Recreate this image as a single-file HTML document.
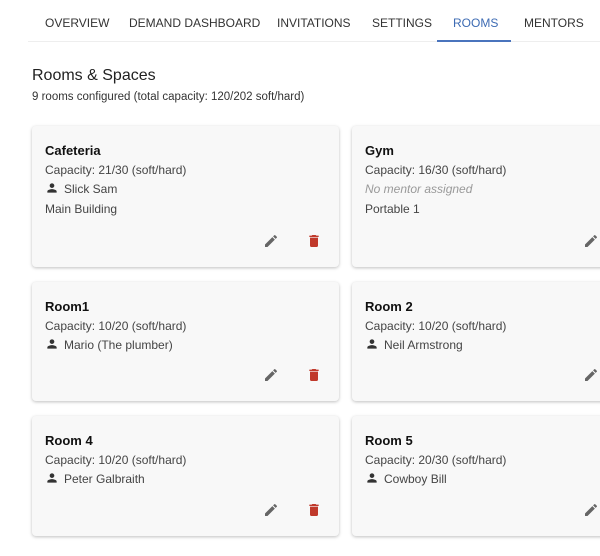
<!DOCTYPE html>
<html><head><style>
body{margin:0;width:600px;height:556px;overflow:hidden;background:#fff;font-family:"Liberation Sans",sans-serif;color:#222;position:relative}
#wrap{position:absolute;left:0;top:0;width:600px;height:556px;overflow:hidden}
.tab{position:absolute;top:16px;font-size:12px;color:#333}
.card{position:absolute;background:#f8f8f8;border-radius:4px;box-shadow:0 1px 3px rgba(0,0,0,.25);width:307px}
.card b{position:absolute;left:13px;top:17px;font-size:13px;color:#111}
.l{position:absolute;left:13px;font-size:12px;color:#444;white-space:nowrap}
.ic{position:absolute}
</style></head><body><div id="wrap">
<div class="tab" style="left:45px">OVERVIEW</div>
<div class="tab" style="left:129px">DEMAND DASHBOARD</div>
<div class="tab" style="left:277px">INVITATIONS</div>
<div class="tab" style="left:372px">SETTINGS</div>
<div class="tab" style="left:453px;color:#3d6bb3">ROOMS</div>
<div class="tab" style="left:524px">MENTORS</div>
<div style="position:absolute;left:28px;right:0;top:41px;height:1px;background:#eee"></div>
<div style="position:absolute;left:437px;width:74px;top:40px;height:2px;background:#4a74bd"></div>
<div style="position:absolute;left:32px;top:67px;font-size:16px;color:#222">Rooms &amp; Spaces</div>
<div style="position:absolute;left:32px;top:91px;font-size:11.5px;color:#333">9 rooms configured (total capacity: 120/202 soft/hard)</div>
<div id="c"></div>
</div>
<script>
var P='<svg class="ic" width="14" height="14" viewBox="0 0 24 24"><path fill="#333" d="M12 12c2.2 0 4-1.8 4-4s-1.8-4-4-4-4 1.8-4 4 1.8 4 4 4zm0 2c-2.7 0-8 1.3-8 4v2h16v-2c0-2.7-5.3-4-8-4z"/></svg>';
var E='<svg width="16" height="16" viewBox="0 0 24 24"><path fill="#666" d="M3 17.25V21h3.75L17.8 9.94l-3.75-3.75L3 17.25zM20.7 7.04a1 1 0 0 0 0-1.41l-2.34-2.34a1 1 0 0 0-1.41 0l-1.83 1.83 3.75 3.75 1.83-1.83z"/></svg>';
var D='<svg width="16" height="16" viewBox="0 0 24 24"><path fill="#c0392b" d="M6 19c0 1.1.9 2 2 2h8c1.1 0 2-.9 2-2V7H6v12zM19 4h-3.5l-1-1h-5l-1 1H5v2h14V4z"/></svg>';
var cards=[
[32,126,141,"Cafeteria","21/30","Slick Sam","Main Building",1],
[352,126,141,"Gym","16/30",null,"Portable 1",0],
[32,282,119,"Room1","10/20","Mario (The plumber)",null,1],
[352,282,119,"Room 2","10/20","Neil Armstrong",null,0],
[32,416,120,"Room 4","10/20","Peter Galbraith",null,1],
[352,416,120,"Room 5","20/30","Cowboy Bill",null,0]];
var h='';
cards.forEach(function(c){
h+='<div class="card" style="left:'+c[0]+'px;top:'+c[1]+'px;height:'+c[2]+'px"><b>'+c[3]+'</b>';
h+='<div class="l" style="top:37px">Capacity: '+c[4]+' (soft/hard)</div>';
if(c[5])h+='<div class="l" style="top:56px">'+P.replace('class="ic"','class="ic" style="left:0;top:-1px"')+'<span style="margin-left:19px">'+c[5]+'</span></div>';
else h+='<div class="l" style="top:56px;color:#999;font-style:italic">No mentor assigned</div>';
if(c[6])h+='<div class="l" style="top:76px">'+c[6]+'</div>';
var by=c[2]-34;
h+='<div style="position:absolute;left:231px;top:'+by+'px">'+E+'</div>';
h+='<div style="position:absolute;left:274px;top:'+by+'px">'+D+'</div>';
h+='</div>';});
document.getElementById('c').innerHTML=h;
</script>
</body></html>
